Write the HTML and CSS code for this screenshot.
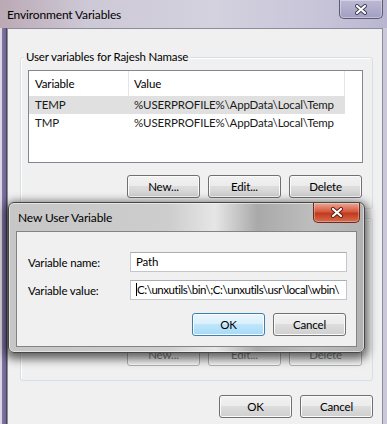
FILE: index.html
```html
<!DOCTYPE html>
<html lang="en">
<head>
    <meta charset="UTF-8">
    <meta name="viewport" content="width=device-width, initial-scale=1.0">
    <title>Environment Variables</title>
    <link rel="stylesheet" href="styles.css">
</head>
<body>
    <div class="window">
        <div class="titlebar">
            <span class="title">Environment Variables</span>
            <span class="close-btn">
                <svg width="12" height="11" viewBox="0 0 12 11">
                    <path d="M2 2 L10 9 M10 2 L2 9" stroke="#3d3b52" stroke-width="4" stroke-linecap="round"/>
                    <path d="M2 2 L10 9 M10 2 L2 9" stroke="#fff" stroke-width="2.2" stroke-linecap="round"/>
                </svg>
            </span>
        </div>

        <div class="client">
            <!-- 用户变量 -->
            <div class="group user-group">
                <div class="group-label">User variables for Rajesh Namase</div>
                <div class="list user-list">
                    <div class="list-head">
                        <span class="col-var">Variable</span>
                        <span class="col-val">Value</span>
                        <span class="col-rest"></span>
                    </div>
                    <div class="row selected">
                        <span class="cell-var">TEMP</span>
                        <span class="cell-val">%USERPROFILE%\AppData\Local\Temp</span>
                    </div>
                    <div class="row">
                        <span class="cell-var">TMP</span>
                        <span class="cell-val">%USERPROFILE%\AppData\Local\Temp</span>
                    </div>
                </div>
                <div class="btn-row">
                    <button class="btn">New...</button>
                    <button class="btn">Edit...</button>
                    <button class="btn">Delete</button>
                </div>
            </div>

            <!-- 系统变量（被对话框遮住） -->
            <div class="group sys-group">
                <div class="list sys-list"></div>
                <div class="btn-row">
                    <button class="btn disabled">New...</button>
                    <button class="btn disabled">Edit...</button>
                    <button class="btn disabled">Delete</button>
                </div>
            </div>

            <div class="footer">
                <button class="btn">OK</button>
                <button class="btn">Cancel</button>
            </div>
        </div>

        <!-- 新建用户变量对话框 -->
        <div class="dialog">
            <div class="dialog-titlebar">
                <span class="dialog-title">New User Variable</span>
                <span class="dialog-close">
                    <svg width="12" height="11" viewBox="0 0 12 11">
                        <path d="M2 2 L10 9 M10 2 L2 9" stroke="#5a1a10" stroke-width="4" stroke-linecap="round"/>
                        <path d="M2 2 L10 9 M10 2 L2 9" stroke="#fff" stroke-width="2.2" stroke-linecap="round"/>
                    </svg>
                </span>
            </div>
            <div class="dialog-client">
                <div class="field">
                    <span class="field-label">Variable name:</span>
                    <div class="input">Path</div>
                </div>
                <div class="field">
                    <span class="field-label">Variable value:</span>
                    <div class="input path-value"><span class="caret"></span>C:\unxutils\bin\;C:\unxutils\usr\local\wbin\</div>
                </div>
                <div class="dialog-buttons">
                    <button class="btn default">OK</button>
                    <button class="btn">Cancel</button>
                </div>
            </div>
        </div>
    </div>
</body>
</html>
```

FILE: styles.css
```css
body {
    margin: 0;
    font-family: Lato, "Liberation Sans", sans-serif;
    font-size: 11.5px;
    letter-spacing: -0.15px;
    color: #000;
}
* {
    box-sizing: border-box;
}
.window {
    position: relative;
    width: 387px;
    height: 424px;
    overflow: hidden;
    background: linear-gradient(90deg, #d9d7e2 0, #d9d7e2 2px, #8376a6 2px, #6f6392 6px, #4a4858 6px, #4a4858 7px, #cbc8da 7px);
}
.titlebar {
    display: flex;
    justify-content: space-between;
    align-items: flex-start;
    height: 28px;
    padding: 0 4px 0 7px;
    background: linear-gradient(90deg, #bba9b4 0%, #cdc8d6 22%, #d4d2df 55%, #c6c3d8 85%, #b9b5d0 100%);
}
.title {
    font-size: 12px;
    line-height: 29px;
}
.close-btn {
    display: flex;
    align-items: center;
    justify-content: center;
    width: 44px;
    height: 19px;
    border: 1px solid #5c5a72;
    border-top: none;
    border-radius: 0 0 5px 5px;
    background: linear-gradient(#bdb9d4, #a29ec2);
    box-shadow: inset 0 0 0 1px rgba(255, 255, 255, 0.35);
}
.client {
    height: 396px;
    margin: 0 4px 0 7px;
    padding-top: 28px;
    border: 1px solid #8d8c9c;
    border-bottom: none;
    background: #f0f0f0;
}
.group {
    margin: 0 9px 0 12px;
    border: 1px solid #d5dfe5;
    border-radius: 3px;
    box-shadow: inset 1px 1px 0 #fff;
}
.group-label {
    width: fit-content;
    margin: -8px 0 0 3px;
    padding: 0 2px;
    line-height: 14px;
    background: #f0f0f0;
}
.user-group {
    padding-bottom: 10px;
}
.sys-group {
    margin-top: 9px;
    padding-bottom: 14px;
}
.list {
    margin: 6px 9px 0 7px;
    border: 1px solid #828790;
    background: #fff;
}
.user-list {
    height: 93px;
}
.sys-list {
    height: 99px;
    margin-top: 13px;
}
.list-head {
    display: flex;
    height: 25px;
    line-height: 25px;
}
.col-var, .cell-var {
    width: 100px;
    padding-left: 6px;
}
.col-val, .cell-val {
    width: 216px;
    padding-left: 5px;
}
.col-var, .col-val {
    border-right: 1px solid #e5e5e5;
}
.col-rest {
    flex: 1;
}
.row {
    display: flex;
    width: 316px;
    height: 18px;
    line-height: 18px;
    color: #1a1a1a;
}
.row.selected {
    background: #e0e0e0;
}
.btn-row {
    display: flex;
    justify-content: flex-end;
    gap: 8px;
    margin: 12px 10px 0 0;
}
.btn {
    width: 73px;
    height: 23px;
    padding: 0;
    border: 1px solid #707070;
    border-radius: 3px;
    background: linear-gradient(#f2f2f2 0%, #ebebeb 49%, #dddddd 50%, #cfcfcf 100%);
    box-shadow: inset 0 0 0 1px #fbfbfb;
    font: inherit;
    letter-spacing: inherit;
    color: #000;
}
.btn.disabled {
    border-color: #adb2b5;
    background: #f4f4f4;
    color: #838383;
}
.btn.default {
    border-color: #3c7fb1;
    background: linear-gradient(#eaf6fd 0%, #d9f0fc 49%, #bee6fd 50%, #a7d9f5 100%);
    box-shadow: inset 0 0 0 1px #fff;
}
.footer {
    display: flex;
    justify-content: flex-end;
    gap: 8px;
    margin: 14px 9px 0 0;
}
.dialog {
    position: absolute;
    left: 8px;
    top: 202px;
    display: flex;
    flex-direction: column;
    width: 357px;
    height: 151px;
    padding: 0 7px 5px 7px;
    border: 1px solid #474747;
    border-radius: 6px;
    background: linear-gradient(90deg, #c6c6c6 0%, #cdcdcd 45%, #e6e6e6 58%, #a9a9a9 70%, #bdbdbd 85%, #b2b2b2 100%);
    box-shadow: inset 0 0 0 1px rgba(255, 255, 255, 0.5), 0 3px 10px 3px rgba(0, 0, 0, 0.6);
}
.dialog-titlebar {
    display: flex;
    justify-content: space-between;
    align-items: flex-start;
    height: 28px;
}
.dialog-title {
    margin-left: 2px;
    font-size: 12px;
    line-height: 29px;
}
.dialog-close {
    display: flex;
    align-items: center;
    justify-content: center;
    width: 47px;
    height: 20px;
    margin-right: -3px;
    border: 1px solid #6d2a1e;
    border-top: none;
    border-radius: 0 0 5px 5px;
    background: linear-gradient(#eaa896 0%, #d45a3f 45%, #c13a1e 55%, #d66d4f 100%);
    box-shadow: inset 0 0 0 1px rgba(255, 255, 255, 0.3);
}
.dialog-client {
    flex: 1;
    display: flex;
    flex-direction: column;
    gap: 8px;
    padding-top: 20px;
    border: 1px solid #838383;
    background: #f0f0f0;
}
.field {
    display: flex;
    align-items: center;
}
.field-label {
    width: 102px;
    margin-left: 11px;
}
.input {
    width: 217px;
    height: 20px;
    padding-left: 5px;
    line-height: 18px;
    border: 1px solid #c3c6cc;
    border-top-color: #abadb3;
    background: #fff;
    white-space: nowrap;
    overflow: hidden;
}
.path-value {
    letter-spacing: -0.45px;
}
.caret {
    display: inline-block;
    width: 1px;
    height: 13px;
    margin-right: 0;
    vertical-align: -2px;
    background: #000;
}
.dialog-buttons {
    display: flex;
    justify-content: flex-end;
    gap: 8px;
    margin: 5px 10px 0 0;
}
```
